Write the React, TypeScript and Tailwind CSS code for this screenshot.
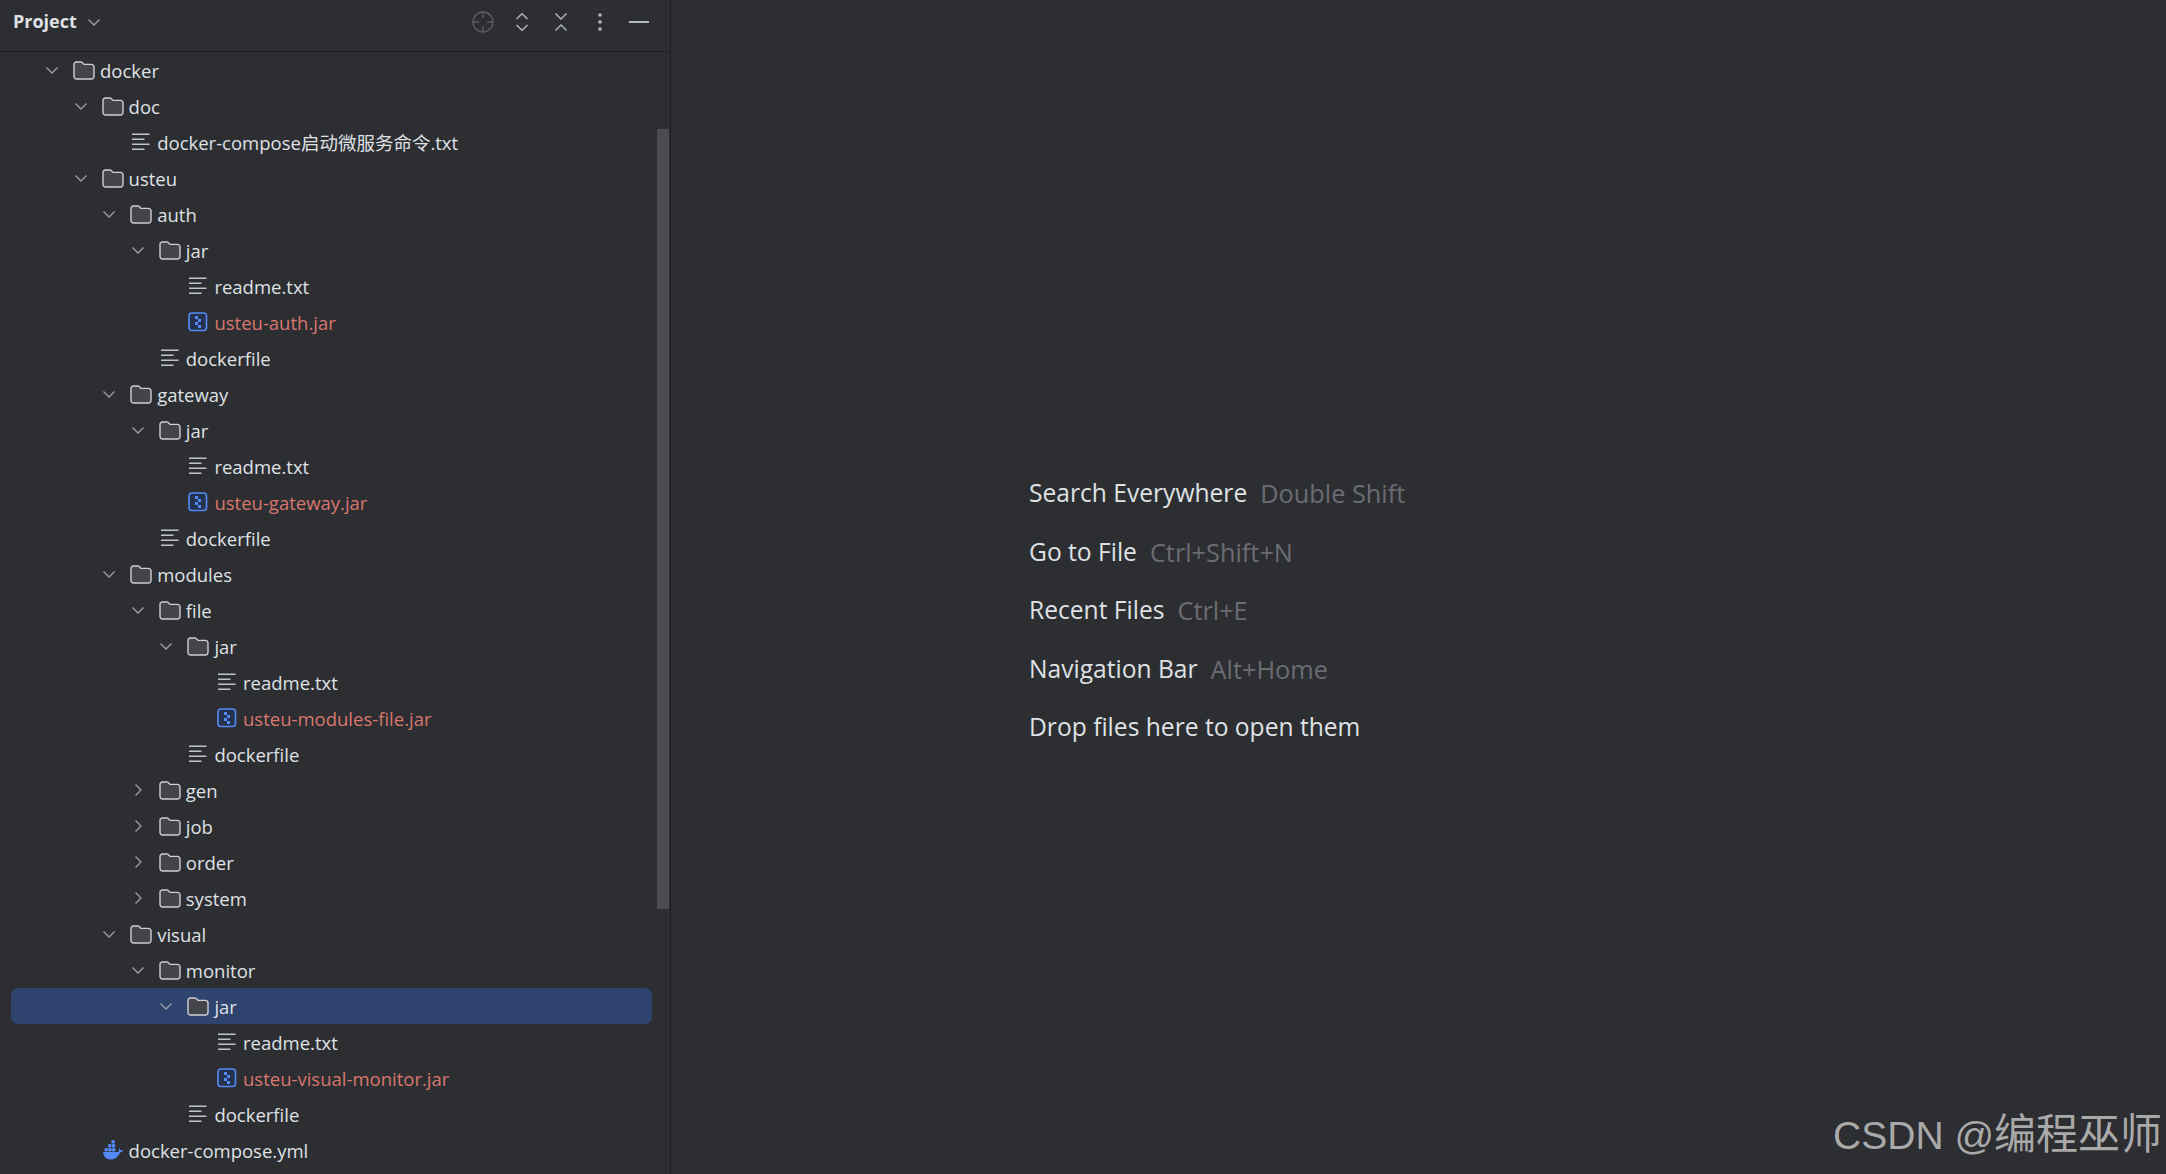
const FONT = "font-['Open_Sans','Noto_Sans_CJK_SC',sans-serif]";

type Kind = "folder" | "closed" | "text" | "jar" | "docker";
type Node = { depth: number; kind: Kind; name: string; selected?: boolean };

const TREE: Node[] = [
  { depth: 0, kind: "folder", name: "docker" },
  { depth: 1, kind: "folder", name: "doc" },
  { depth: 2, kind: "text", name: "docker-compose启动微服务命令.txt" },
  { depth: 1, kind: "folder", name: "usteu" },
  { depth: 2, kind: "folder", name: "auth" },
  { depth: 3, kind: "folder", name: "jar" },
  { depth: 4, kind: "text", name: "readme.txt" },
  { depth: 4, kind: "jar", name: "usteu-auth.jar" },
  { depth: 3, kind: "text", name: "dockerfile" },
  { depth: 2, kind: "folder", name: "gateway" },
  { depth: 3, kind: "folder", name: "jar" },
  { depth: 4, kind: "text", name: "readme.txt" },
  { depth: 4, kind: "jar", name: "usteu-gateway.jar" },
  { depth: 3, kind: "text", name: "dockerfile" },
  { depth: 2, kind: "folder", name: "modules" },
  { depth: 3, kind: "folder", name: "file" },
  { depth: 4, kind: "folder", name: "jar" },
  { depth: 5, kind: "text", name: "readme.txt" },
  { depth: 5, kind: "jar", name: "usteu-modules-file.jar" },
  { depth: 4, kind: "text", name: "dockerfile" },
  { depth: 3, kind: "closed", name: "gen" },
  { depth: 3, kind: "closed", name: "job" },
  { depth: 3, kind: "closed", name: "order" },
  { depth: 3, kind: "closed", name: "system" },
  { depth: 2, kind: "folder", name: "visual" },
  { depth: 3, kind: "folder", name: "monitor" },
  { depth: 4, kind: "folder", name: "jar", selected: true },
  { depth: 5, kind: "text", name: "readme.txt" },
  { depth: 5, kind: "jar", name: "usteu-visual-monitor.jar" },
  { depth: 4, kind: "text", name: "dockerfile" },
  { depth: 1, kind: "docker", name: "docker-compose.yml" },
];

const HINTS = [
  { label: "Search Everywhere", keys: "Double Shift" },
  { label: "Go to File", keys: "Ctrl+Shift+N" },
  { label: "Recent Files", keys: "Ctrl+E" },
  { label: "Navigation Bar", keys: "Alt+Home" },
  { label: "Drop files here to open them", keys: "" },
];

const Chevron = ({ open }: { open: boolean }) => (
  <svg width="14" height="14" viewBox="0 0 14 14" fill="none" stroke="#9da0a8" strokeWidth="1.3">
    {open ? <path d="M1.500 4.500 7 10l5.500-5.500" /> : <path d="M4.500 1.500 10 7l-5.500 5.500" />}
  </svg>
);

const FolderIcon = () => (
  <svg width="22" height="22" viewBox="0 0 22 22" fill="#43454a" stroke="#ced0d6" strokeWidth="1.4">
    <path d="M1 5.500A2.500 2.500 0 0 1 3.500 3h4.200c.6 0 1.100.2 1.500.6L11 5.400h7.500A2.500 2.500 0 0 1 21 7.900v9.600a2.500 2.500 0 0 1-2.500 2.500h-15A2.500 2.500 0 0 1 1 17.500z" />
  </svg>
);

const TextIcon = () => (
  <svg width="22" height="22" viewBox="0 0 22 22" fill="none" stroke="#c0c3c9" strokeWidth="1.6">
    <path d="M2 3.300h17.500M2 8.300h12.500M2 13.300h17.500M2 18.300h12.500" />
  </svg>
);

const JarIcon = () => (
  <svg width="22" height="22" viewBox="0 0 22 22">
    <rect x="2" y="2" width="17.500" height="17.500" rx="3" fill="#25324d" stroke="#548af7" strokeWidth="1.600" />
    <path d="M8 5h3v3H8zM11 8h3v3h-3zM8 11h3v3H8zM11 14h3v3h-3z" fill="#548af7" />
  </svg>
);

const DockerIcon = () => (
  <svg width="22" height="22" viewBox="0 0 22 22" fill="#548af7">
    <rect x="9.500" y="1" width="3.400" height="3.400" rx="1.200" />
    <rect x="6" y="5" width="3.400" height="3.400" rx="1.200" />
    <rect x="9.800" y="5" width="3.400" height="3.400" rx="1.200" />
    <rect x="2.500" y="9" width="3.400" height="3.400" rx="1.200" />
    <rect x="6.300" y="9" width="3.400" height="3.400" rx="1.200" />
    <rect x="10" y="9" width="3.400" height="3.400" rx="1.200" />
    <path d="M1 13h15.500c.5-1.500.3-3 .8-3.800.6.700.8 1.400.9 2 1-.4 2-.4 2.800 0-.5 1.400-1.500 2-3 2.200C16.500 17.500 13 20.500 8.500 20.500 4 20.500 1.500 17.500 1 13z" />
  </svg>
);

const ICONS: Record<Kind, () => React.ReactElement> = {
  folder: FolderIcon,
  closed: FolderIcon,
  text: TextIcon,
  jar: JarIcon,
  docker: DockerIcon,
};

const TreeRow = ({ node }: { node: Node }) => {
  const Icon = ICONS[node.kind];
  const hasChevron = node.kind === "folder" || node.kind === "closed";

  return (
    <div
      className={`ml-[11px] mr-[18px] flex h-9 items-center rounded-[7px] ${node.selected ? "bg-[#2e436e]" : ""}`}
      style={{ paddingLeft: 27 + node.depth * 28.6 }}
    >
      <div className="flex w-[35px] shrink-0 pl-[7px]">
        {hasChevron && <Chevron open={node.kind === "folder"} />}
      </div>
      <Icon />
      <span
        className={`ml-[5px] mt-px whitespace-nowrap text-[18.5px] ${node.kind === "jar" ? "text-[#d8776e]" : "text-[#dfe1e5]"}`}
      >
        {node.name}
      </span>
    </div>
  );
};

const ToolButton = ({ children }: { children: React.ReactNode }) => (
  <div className="flex w-[39px] justify-center">{children}</div>
);

const Header = () => (
  <div className="flex h-[52px] shrink-0 items-center border-b border-[#1e1f22] pb-[8px] pl-[13px] pr-[12px]">
    <span className="text-[18px] font-bold text-[#dfe1e5]">Project</span>
    <div className="ml-[10px] mt-px">
      <Chevron open />
    </div>
    <div className="ml-auto flex items-center">
      <ToolButton>
        <svg width="22" height="22" viewBox="0 0 22 22" fill="none" stroke="#5a5d63" strokeWidth="1.4">
          <circle cx="11" cy="11" r="10" />
          <path d="M11 1v6M11 15v6M1 11h6M15 11h6" />
        </svg>
      </ToolButton>
      <ToolButton>
        <svg width="14" height="20" viewBox="0 0 14 20" fill="none" stroke="#b4b8bf" strokeWidth="1.4">
          <path d="M1.500 7 7 1.700 12.500 7M1.500 13 7 18.300 12.500 13" />
        </svg>
      </ToolButton>
      <ToolButton>
        <svg width="14" height="20" viewBox="0 0 14 20" fill="none" stroke="#b4b8bf" strokeWidth="1.4">
          <path d="M1.500 1.500 7 7l5.500-5.500M1.500 18.500 7 13l5.500 5.500" />
        </svg>
      </ToolButton>
      <ToolButton>
        <svg width="6" height="20" viewBox="0 0 6 20" fill="#b4b8bf">
          <circle cx="3" cy="3" r="1.800" />
          <circle cx="3" cy="10" r="1.800" />
          <circle cx="3" cy="17" r="1.800" />
        </svg>
      </ToolButton>
      <ToolButton>
        <div className="h-[2px] w-5 bg-[#b4b8bf]" />
      </ToolButton>
    </div>
  </div>
);

export default function App() {
  return (
    <div className={`relative flex h-screen overflow-hidden bg-[#2d2e32] ${FONT}`}>
      <aside className="relative flex w-[671px] shrink-0 flex-col overflow-hidden border-r border-[#1e1f22]">
        <Header />
        <div className="flex flex-col">
          {TREE.map((node, i) => (
            <TreeRow key={i} node={node} />
          ))}
        </div>
        <div className="absolute left-[657px] top-[129px] h-[780px] w-3 bg-[#4b4c50]" />
      </aside>
      <main className="flex flex-1 flex-col gap-[20px] pl-[358px] pt-[474px] leading-[38.6px]">
        {HINTS.map((hint) => (
          <div key={hint.label} className="flex gap-[13px] whitespace-nowrap">
            <span className="text-[24.6px] text-[#dfe1e5]">{hint.label}</span>
            {hint.keys && <span className="text-[25.300px] text-[#6a6c72]">{hint.keys}</span>}
          </div>
        ))}
      </main>
      <div className="absolute bottom-[15px] right-[4px] whitespace-nowrap font-['Liberation_Sans','Noto_Sans_CJK_SC',sans-serif] text-[39px] leading-[46px] text-[#a9a9a9]">
        CSDN @<span className="text-[42px]">编程巫师</span>
      </div>
    </div>
  );
}
